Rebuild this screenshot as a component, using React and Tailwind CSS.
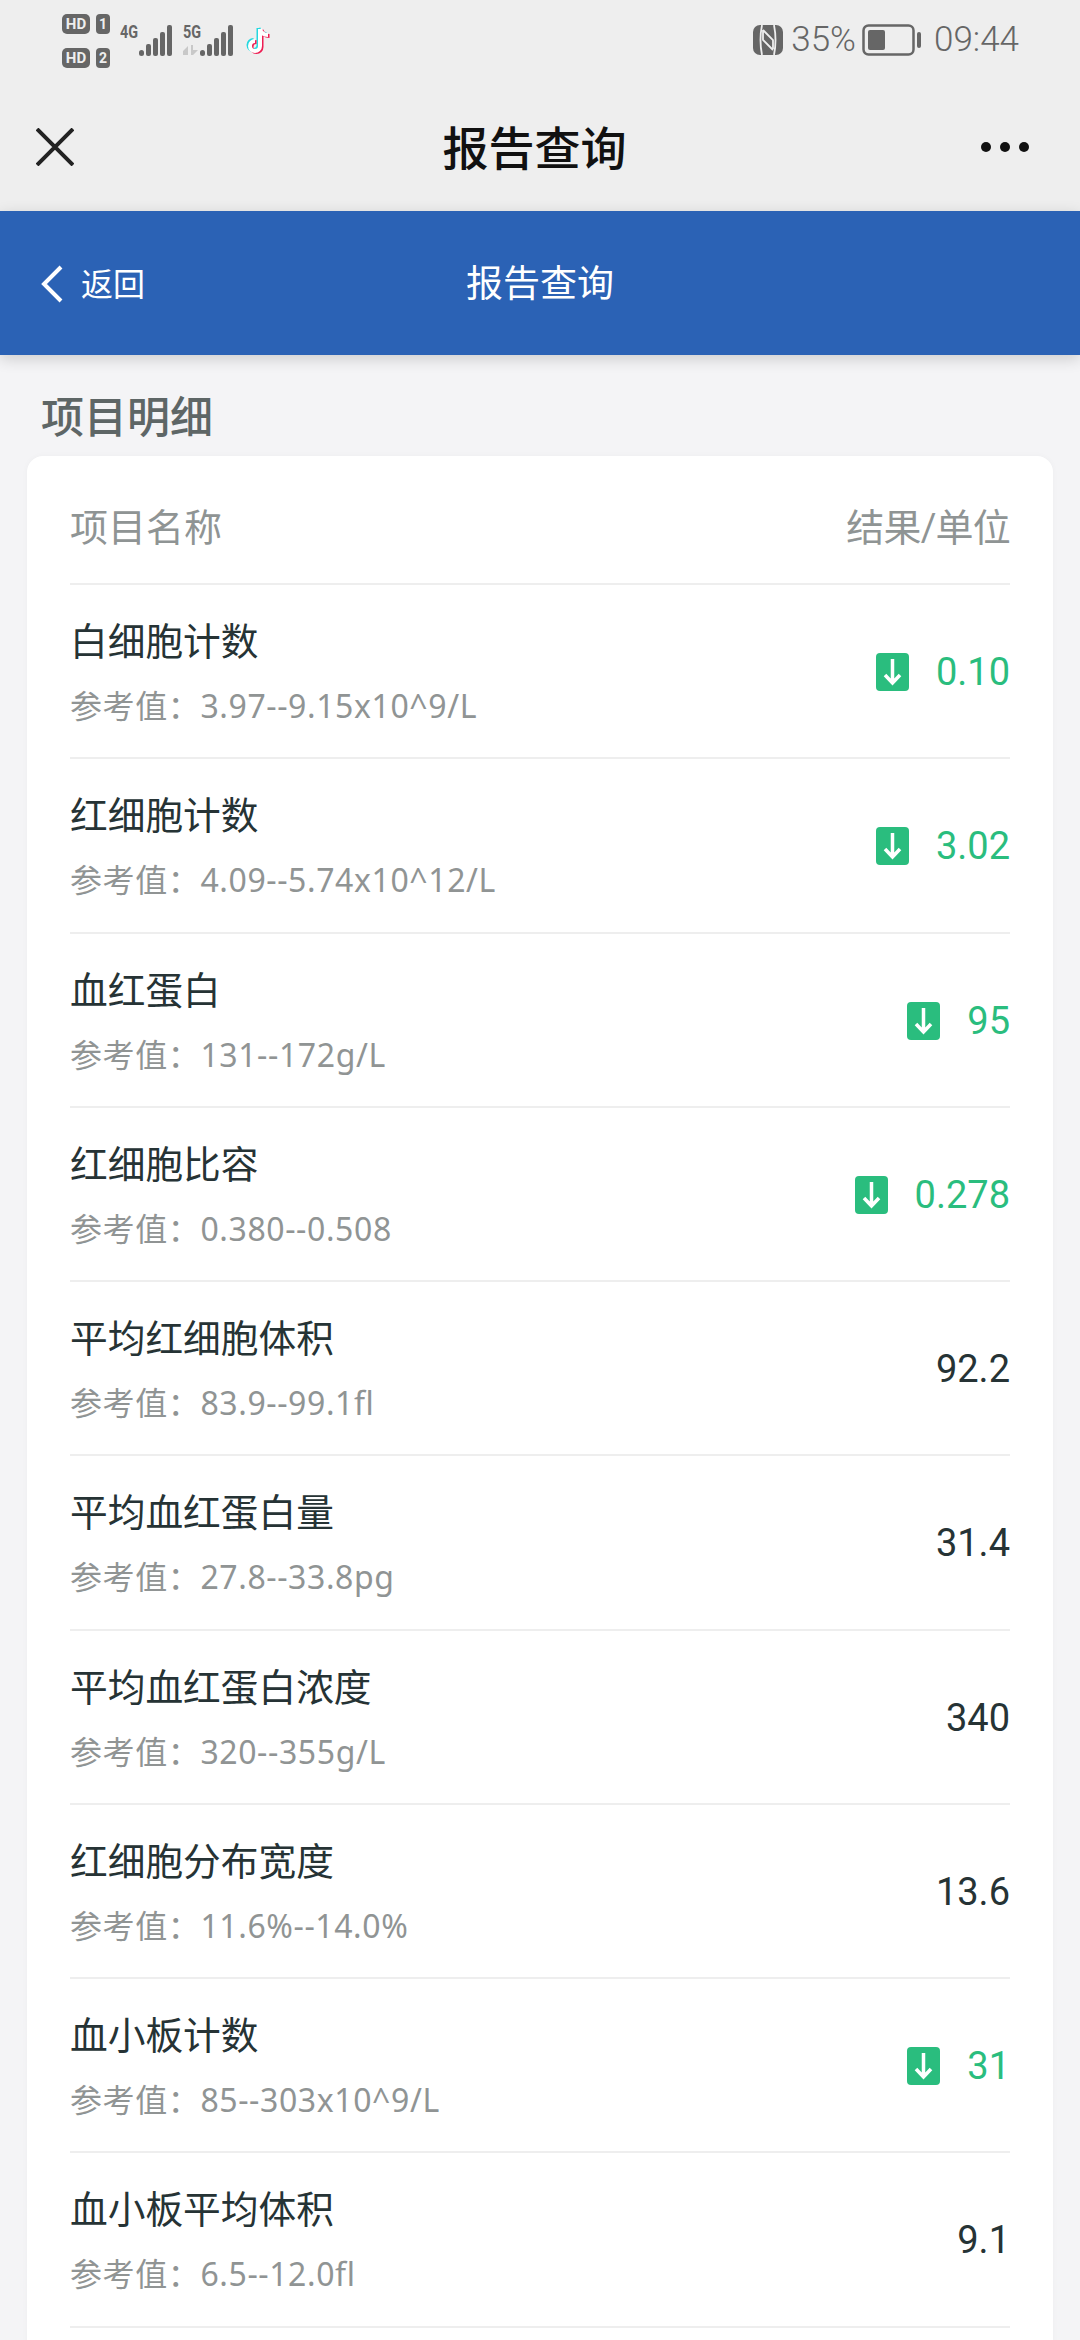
import React from "react";

const CJK = "font-['Roboto','Noto_Sans_CJK_SC',sans-serif]";

const items = [
  { name: "白细胞计数", ref: "3.97--9.15x10^9/L", value: "0.10", low: true },
  { name: "红细胞计数", ref: "4.09--5.74x10^12/L", value: "3.02", low: true },
  { name: "血红蛋白", ref: "131--172g/L", value: "95", low: true },
  { name: "红细胞比容", ref: "0.380--0.508", value: "0.278", low: true },
  { name: "平均红细胞体积", ref: "83.9--99.1fl", value: "92.2" },
  { name: "平均血红蛋白量", ref: "27.8--33.8pg", value: "31.4" },
  { name: "平均血红蛋白浓度", ref: "320--355g/L", value: "340" },
  { name: "红细胞分布宽度", ref: "11.6%--14.0%", value: "13.6" },
  { name: "血小板计数", ref: "85--303x10^9/L", value: "31", low: true },
  { name: "血小板平均体积", ref: "6.5--12.0fl", value: "9.1" },
];

function Bars() {
  return (
    <svg width="33" height="31" viewBox="0 0 33 31">
      <rect x="0" y="25" width="5" height="6" rx="2.5" fill="#666" />
      <rect x="7" y="19" width="5" height="12" rx="2" fill="#666" />
      <rect x="14" y="13" width="5" height="18" rx="2" fill="#666" />
      <rect x="21" y="7" width="5" height="24" rx="2" fill="#666" />
      <rect x="28" y="0" width="5" height="31" rx="2" fill="#666" />
    </svg>
  );
}

function StatusBar() {
  return (
    <div className="flex h-[70px] items-start justify-between pl-[62px] pr-[61px] pt-[14px] text-[#666]">
      <div className="flex items-start">
        <div className="flex flex-col gap-[14px]">
          {[1, 2].map((n) => (
            <div key={n} className="flex gap-[6px] font-['Roboto',sans-serif] text-[15px] leading-[20px] font-bold text-[#eee]">
              <span className="flex h-[20px] w-[28px] items-center justify-center rounded-[5px] bg-[#666]">HD</span>
              <span className="flex h-[20px] w-[14px] items-center justify-center rounded-[4px] bg-[#666] text-[14px]">{n}</span>
            </div>
          ))}
        </div>
        <div className="relative ml-[11px] h-[42px] w-[50px]">
          <span className="absolute left-[-1px] top-[10px] origin-left scale-x-[0.8] font-['Roboto',sans-serif] text-[18px] leading-[16px] font-bold">4G</span>
          <div className="absolute left-[18px] top-[11px]">
            <Bars />
          </div>
        </div>
        <div className="relative ml-[12px] h-[42px] w-[50px]">
          <span className="absolute left-0 top-[10px] origin-left scale-x-[0.8] font-['Roboto',sans-serif] text-[18px] leading-[16px] font-bold">5G</span>
          <svg className="absolute left-0 top-[31px]" width="15" height="10" viewBox="0 0 15 10" fill="#c8c8c8">
            <path d="M0 6l5-5v9H0zM8 0h2v5h5l-5 5H8z" />
          </svg>
          <div className="absolute left-[17px] top-[11px]">
            <Bars />
          </div>
        </div>
        <svg className="ml-[13px] mt-[12px]" width="26" height="30" viewBox="0 0 26 30" fill="none">
          <path d="M14 3v17a5 5 0 1 1-5-5M14 3c1 4 4 6 8 6" stroke="#25d8e0" strokeWidth="4" transform="translate(-1.5 -1)" />
          <path d="M14 3v17a5 5 0 1 1-5-5M14 3c1 4 4 6 8 6" stroke="#ee1d52" strokeWidth="4" transform="translate(1.5 1)" />
          <path d="M14 3v17a5 5 0 1 1-5-5M14 3c1 4 4 6 8 6" stroke="#fff" strokeWidth="4" />
        </svg>
      </div>
      <div className="flex items-center pt-[10px]">
        <svg width="30" height="30" viewBox="0 0 30 30">
          <rect width="30" height="30" rx="7" fill="#666" />
          <path d="M9 0C7 10 7 20 9 30M21 0C23 10 23 20 21 30" stroke="#eee" strokeWidth="1.8" fill="none" />
          <path d="M10 5l10 10v9M20 25L10 15V5" stroke="#eee" strokeWidth="1.8" fill="none" />
        </svg>
        <span className="ml-[8px] font-['Roboto',sans-serif] text-[35px] leading-[32px] font-light">35%</span>
        <svg className="ml-[6px]" width="60" height="32" viewBox="0 0 60 32" fill="none">
          <rect x="1.5" y="1.5" width="50" height="29" rx="5" stroke="#666" strokeWidth="2.5" />
          <rect x="6" y="6" width="17" height="20" rx="2" fill="#666" />
          <rect x="55" y="8" width="4" height="16" rx="2" fill="#666" />
        </svg>
        <span className="ml-[12px] font-['Roboto',sans-serif] text-[35px] leading-[32px] font-light">09:44</span>
      </div>
    </div>
  );
}

function TitleBar() {
  return (
    <div className="relative flex h-[141px] items-center justify-between pt-[12px] pl-[36px] pr-[51px]">
      <svg width="38" height="38" viewBox="0 0 38 38">
        <path d="M1 1l36 36M37 1L1 37" stroke="#222" strokeWidth="4" fill="none" />
      </svg>
      <h1 className="ml-[14px] mt-[4px] text-[46px] leading-[60px] font-medium text-[#111]">报告查询</h1>
      <div className="flex gap-[9px]">
        <span className="h-[10px] w-[10px] rounded-full bg-[#111]" />
        <span className="h-[10px] w-[10px] rounded-full bg-[#111]" />
        <span className="h-[10px] w-[10px] rounded-full bg-[#111]" />
      </div>
    </div>
  );
}

function NavBar() {
  return (
    <div className="relative flex h-[144px] items-center justify-center bg-[#2b62b5] shadow-[0_4px_14px_rgba(0,0,0,0.16)]">
      <div className="absolute left-[40px] top-[52px] flex items-center">
        <svg width="24" height="38" viewBox="0 0 24 38" fill="none">
          <path d="M21 2L4 19l17 17" stroke="#fff" strokeWidth="4" />
        </svg>
        <span className="ml-[17px] mt-[2px] text-[32px] leading-[40px] text-white">返回</span>
      </div>
      <span className="mt-[4px] text-[37px] leading-[50px] text-white">报告查询</span>
    </div>
  );
}

function LowIcon() {
  return (
    <svg width="33" height="38" viewBox="0 0 33 38" className="mr-[27px]">
      <rect width="33" height="38" rx="4" fill="#2abd7e" />
      <path d="M16.5 6v24M9 22l7.5 8 7.5-8" stroke="#fff" strokeWidth="3.5" fill="none" />
    </svg>
  );
}

function Row({ item }) {
  return (
    <div className="flex h-[174.25px] items-center justify-between border-t-2 border-[#eeeeee]">
      <div>
        <div className="text-[37.7px] leading-[50px] text-[#263335]">{item.name}</div>
        <div className="mt-[18px] translate-y-[1px] font-['Noto_Sans','Noto_Sans_CJK_SC',sans-serif] text-[32px] leading-[40px] tracking-[0.6px] text-[#909494]">
          参考值：{item.ref}
        </div>
      </div>
      <div className="mt-[2px] flex items-center">
        {item.low && <LowIcon />}
        <span className={`text-[38px] leading-[50px] ${item.low ? "text-[#2abd7e]" : "text-[#263335]"}`}>{item.value}</span>
      </div>
    </div>
  );
}

export default function App() {
  return (
    <div className={`h-[2340px] w-[1080px] overflow-hidden bg-[#f4f4f6] ${CJK}`}>
      <div className="bg-[#eeeeee]">
        <StatusBar />
        <TitleBar />
      </div>
      <NavBar />
      <h2 className="pl-[41px] pt-[35px] text-[43px] leading-[56px] font-medium text-[#5e6666]">项目明细</h2>
      <div className="mx-[27px] mt-[10px] rounded-[16px] bg-white px-[43px] shadow-[0_0_6px_rgba(0,0,0,0.03)]">
        <div className="flex h-[127px] items-center justify-between pt-[17px] text-[38px] text-[#8f9494]">
          <span>项目名称</span>
          <span className="tracking-[-0.8px]">结果/单位</span>
        </div>
        {items.map((item) => (
          <Row key={item.name} item={item} />
        ))}
        <div className="h-[100px] border-t-2 border-[#eeeeee]" />
      </div>
    </div>
  );
}
